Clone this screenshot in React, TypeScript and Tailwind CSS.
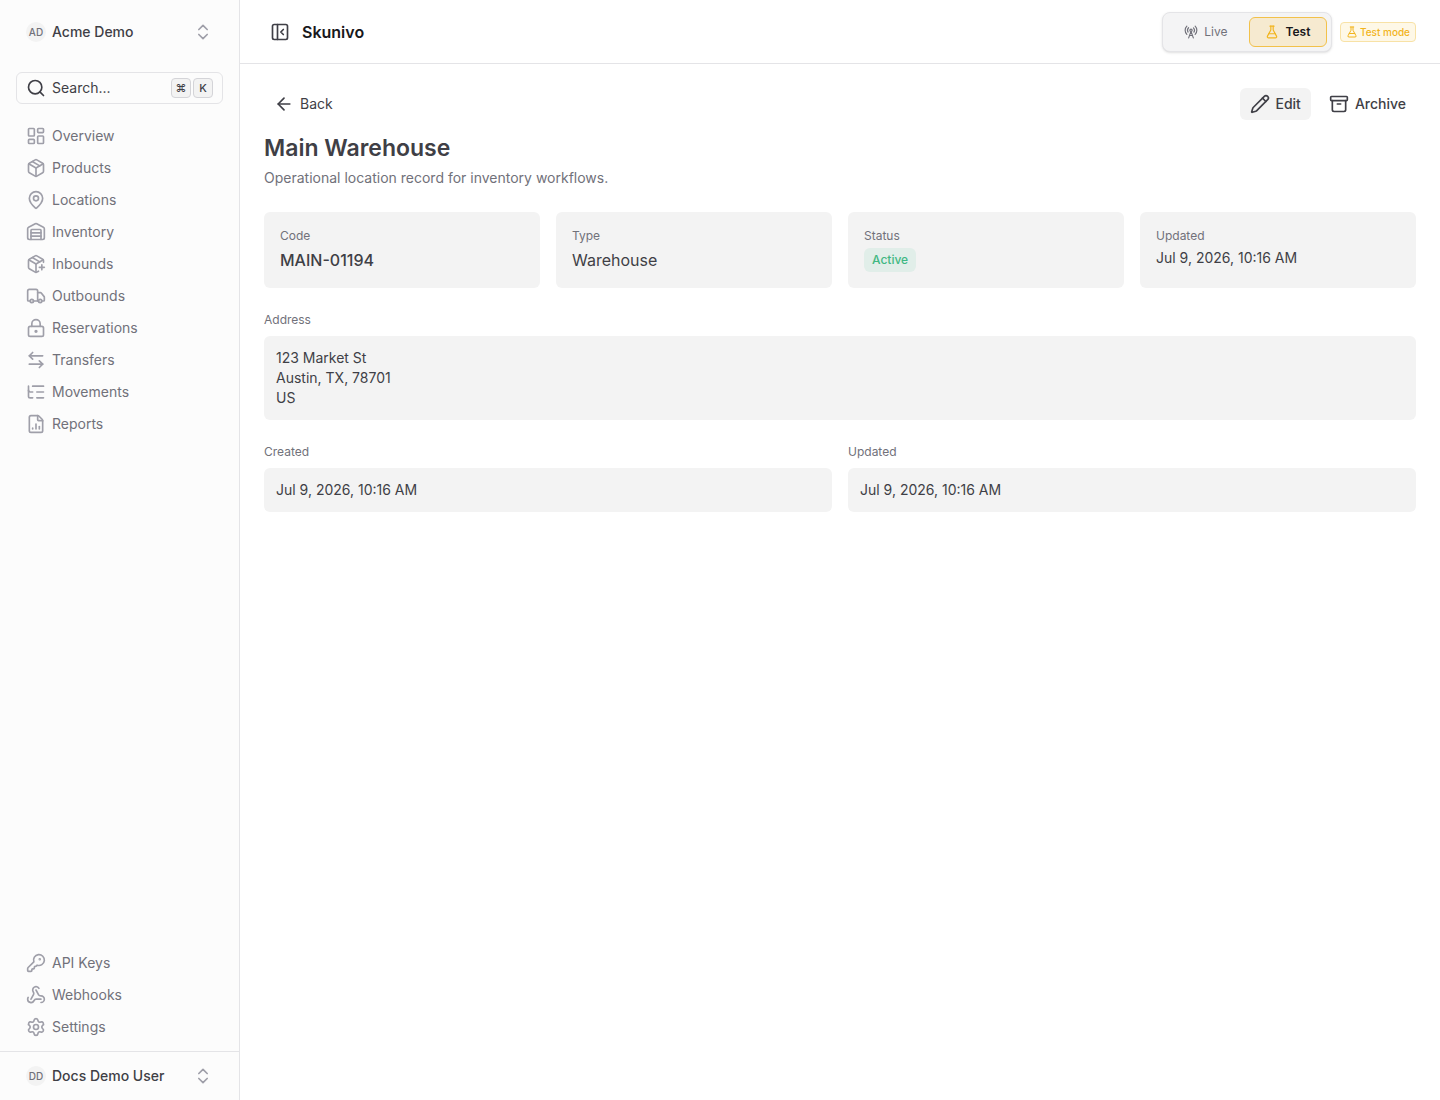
import React, { useState } from 'react';
import {
  Archive,
  ArrowLeft,
  ArrowLeftRight,
  ChevronsUpDown,
  FileChartColumn,
  FlaskConical,
  KeyRound,
  LayoutDashboard,
  ListTree,
  LockKeyhole,
  MapPin,
  Package,
  PackagePlus,
  PanelLeftClose,
  Pencil,
  RadioTower,
  Search,
  Settings,
  Truck,
  Warehouse,
  Webhook,
  type LucideIcon
} from 'lucide-react';

interface NavItem {
  label: string;
  icon: LucideIcon;
}

const mainNav: NavItem[] = [
  { label: 'Overview', icon: LayoutDashboard },
  { label: 'Products', icon: Package },
  { label: 'Locations', icon: MapPin },
  { label: 'Inventory', icon: Warehouse },
  { label: 'Inbounds', icon: PackagePlus },
  { label: 'Outbounds', icon: Truck },
  { label: 'Reservations', icon: LockKeyhole },
  { label: 'Transfers', icon: ArrowLeftRight },
  { label: 'Movements', icon: ListTree },
  { label: 'Reports', icon: FileChartColumn }
];

const footerNav: NavItem[] = [
  { label: 'API Keys', icon: KeyRound },
  { label: 'Webhooks', icon: Webhook },
  { label: 'Settings', icon: Settings }
];

function NavList({ items }: { items: NavItem[] }) {
  return (
    <ul className="flex flex-col px-4">
      {items.map(({ label, icon: Icon }) => (
        <li key={label}>
          <a href="#" className="flex h-8 items-center gap-1.5 px-2.5 text-[#71717a]">
            <Icon size={20} className="text-[#9f9fa9]" />
            {label}
          </a>
        </li>
      ))}
    </ul>
  );
}

function AccountButton({ initials, name }: { initials: string; name: string }) {
  return (
    <button type="button" className="flex h-8 w-full items-center gap-1.5 px-2.5 font-medium text-[#3f3f46]">
      <span className="flex size-5 items-center justify-center rounded-full bg-[#f3f3f3] text-[10px] text-[#71717a]">
        {initials}
      </span>
      <span className="flex-1 text-left">{name}</span>
      <ChevronsUpDown size={20} className="text-[#9f9fa9]" />
    </button>
  );
}

function Kbd({ children }: { children: React.ReactNode }) {
  return (
    <kbd className="flex size-5 items-center justify-center rounded-sm border border-[#d4d4d8] bg-[#f3f3f3] font-[Inter,sans-serif] text-[11px] font-medium text-[#3f3f46]">
      {children}
    </kbd>
  );
}

function StatCard({ label, children }: { label: string; children: React.ReactNode }) {
  return (
    <div className="rounded-md bg-[#f3f3f3] p-4">
      <div className="text-xs/4 text-[#71717a]">{label}</div>
      {children}
    </div>
  );
}

function Field({ label, children }: { label: string; children: React.ReactNode }) {
  return (
    <div>
      <div className="mb-2 text-xs/4 text-[#71717a]">{label}</div>
      <div className="rounded-md bg-[#f3f3f3] p-3 text-[#3f3f46]">{children}</div>
    </div>
  );
}

export default function App() {
  const [mode, setMode] = useState<'live' | 'test'>('test');

  return (
    <div className="flex min-h-screen bg-white font-[Inter,sans-serif] text-sm/5">
      {/* Sidebar */}
      <aside className="flex w-60 shrink-0 flex-col border-r border-[#e4e4e7] bg-[#fcfcfc]">
        <div className="flex h-16 items-center px-4">
          <AccountButton initials="AD" name="Acme Demo" />
        </div>
        <div className="px-4 pt-2 pb-4">
          <button
            type="button"
            className="flex h-8 w-full items-center gap-1.5 rounded-md border border-[#e4e4e7] px-[9px] text-[#3f3f46]"
          >
            <Search size={20} />
            <span className="flex-1 text-left">Search...</span>
            <span className="flex gap-0.5">
              <Kbd>⌘</Kbd>
              <Kbd>K</Kbd>
            </span>
          </button>
        </div>
        <nav aria-label="Main" className="flex flex-1 flex-col justify-between pb-2">
          <NavList items={mainNav} />
          <NavList items={footerNav} />
        </nav>
        <div className="border-t border-[#e4e4e7] px-4 py-2">
          <AccountButton initials="DD" name="Docs Demo User" />
        </div>
      </aside>

      <div className="flex min-w-0 flex-1 flex-col">
        {/* Top bar */}
        <header className="flex h-16 items-center border-b border-[#e4e4e7] px-6">
          <button type="button" aria-label="Collapse sidebar" className="flex size-8 items-center justify-center text-[#3f3f46]">
            <PanelLeftClose size={20} />
          </button>
          <span className="ml-1.5 text-base/5 font-semibold text-[#18181b]">Skunivo</span>

          <div className="ml-auto flex items-center gap-2">
            <div className="flex gap-1 rounded-lg border border-[#e4e4e7] bg-[#f4f4f5] p-1 text-xs/4 shadow-sm">
              <button
                type="button"
                onClick={() => setMode('live')}
                className="flex h-[30px] w-[78px] items-center justify-center gap-1.5 text-[#71717a]"
              >
                <RadioTower size={14} />
                Live
              </button>
              <button
                type="button"
                onClick={() => setMode('test')}
                className="flex h-[30px] w-[78px] items-center justify-center gap-1.5 rounded-md border border-[#f2c14a] bg-[#f6ead0] font-semibold text-[#18181b]"
              >
                <FlaskConical size={14} className="text-[#f2b41c]" />
                Test
              </button>
            </div>
            {mode === 'test' && (
              <span className="flex h-5 items-center gap-0.5 rounded-sm border border-[#f8e2a6] bg-[#fef8e7] px-[5px] text-[10px] font-medium text-[#f2b41c]">
                <FlaskConical size={12} />
                Test mode
              </span>
            )}
          </div>
        </header>

        <main className="p-6">
          <div className="flex items-center justify-between text-[#3f3f46]">
            <a href="#" className="flex h-8 items-center gap-1.5 px-2.5">
              <ArrowLeft size={20} />
              Back
            </a>
            <div className="flex gap-2 font-medium">
              <button type="button" className="flex h-8 items-center gap-1.5 rounded-md bg-[#f3f3f3] px-2.5">
                <Pencil size={20} />
                Edit
              </button>
              <button type="button" className="flex h-8 items-center gap-1.5 px-2.5">
                <Archive size={20} />
                Archive
              </button>
            </div>
          </div>

          <h1 className="mt-3 text-[23px]/8 font-semibold text-[#3f3f46]">Main Warehouse</h1>
          <p className="mt-1 text-[#71717a]">Operational location record for inventory workflows.</p>

          <div className="mt-6 grid grid-cols-4 gap-4">
            <StatCard label="Code">
              <div className="mt-1 text-base/6 font-medium text-[#3f3f46]">MAIN-01194</div>
            </StatCard>
            <StatCard label="Type">
              <div className="mt-1 text-base/6 text-[#3f3f46]">Warehouse</div>
            </StatCard>
            <StatCard label="Status">
              <span className="mt-1 inline-flex h-6 items-center rounded-md bg-[#e1eee9] px-2 text-xs/4 font-medium text-[#3fb883]">
                Active
              </span>
            </StatCard>
            <StatCard label="Updated">
              <div className="mt-1 text-[#3f3f46]">Jul 9, 2026, 10:16 AM</div>
            </StatCard>
          </div>

          <div className="mt-6 grid grid-cols-2 gap-x-4 gap-y-6">
            <div className="col-span-2">
              <Field label="Address">
                <address className="not-italic">
                  123 Market St
                  <br />
                  Austin, TX, 78701
                  <br />
                  US
                </address>
              </Field>
            </div>
            <Field label="Created">Jul 9, 2026, 10:16 AM</Field>
            <Field label="Updated">Jul 9, 2026, 10:16 AM</Field>
          </div>
        </main>
      </div>
    </div>
  );
}
